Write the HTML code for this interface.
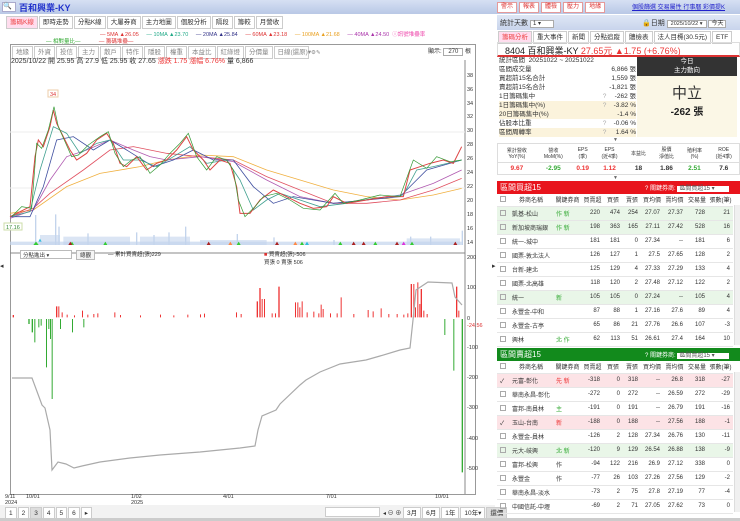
<!DOCTYPE html>
<html><head><meta charset="utf-8"><style>
*{margin:0;padding:0;box-sizing:border-box}
body{width:740px;height:521px;overflow:hidden;background:#fff;font-family:"Liberation Sans","Noto Sans CJK TC",sans-serif;font-size:7px;color:#333;position:relative}
.a{position:absolute;white-space:nowrap}
.top{left:0;top:0;width:740px;height:14px;background:linear-gradient(#d6e0f3,#b9c8e6)}
.tab{display:inline-block;border:1px solid #ccc;background:#fff;padding:1px 3px;margin-right:1px;font-size:6.5px;line-height:9px}
.btn{display:inline-block;border:1px solid #e59a9a;background:#fff;color:#d33;padding:0 3px;font-size:6px;line-height:9px;margin-right:2px}
table{border-collapse:collapse}
.t td{height:14px;border-bottom:1px solid #e6e6e6;font-size:6px;text-align:right;padding-right:3px}
.t td.l{text-align:left;padding-left:3px}
.t tr.h td{height:12px;text-align:center;background:#fff;padding:0}
.g{background:#e9f6e8}.p{background:#fce3e6}
.cb{display:inline-block;width:6px;height:6px;border:1px solid #aaa;vertical-align:middle}
.st td{height:8.9px;line-height:8px;padding:0}
</style></head><body>
<div class="a top"></div>
<div class="a" style="left:2px;top:2px;width:14px;height:10px;background:#fff;border:1px solid #aac;font-size:7px;line-height:8px">🔍</div>
<div class="a" style="left:19px;top:1px;font-size:9px;font-weight:bold;color:#2233cc">百和興業-KY</div>
<div class="a" style="left:497px;top:2px"><span class="btn">警示</span><span class="btn">報表</span><span class="btn">體檢</span><span class="btn">壓力</span><span class="btn">地緣</span></div>
<div class="a" style="left:632px;top:2px;font-size:6px;color:#22c;text-decoration:underline">個股篩選 交易屬性 行事曆 彩價提K</div>

<div class="a" style="left:6px;top:16px"><span class="tab" style="color:#e44;background:#fde">籌碼K線</span><span class="tab">即時走勢</span><span class="tab">分點K線</span><span class="tab">大屢券商</span><span class="tab">主力地圖</span><span class="tab">個股分析</span><span class="tab">隔段</span><span class="tab">籌較</span><span class="tab">月營收</span></div>
<div class="a" style="left:100px;top:30px;font-size:5.5px"><span style="color:#d33">— 5MA ▲26.05</span>&nbsp;&nbsp;&nbsp;&nbsp;&nbsp;<span style="color:#2a8">— 10MA ▲23.70</span>&nbsp;&nbsp;&nbsp;&nbsp;&nbsp;<span style="color:#338">— 20MA ▲25.84</span>&nbsp;&nbsp;&nbsp;&nbsp;&nbsp;<span style="color:#d33">— 60MA ▲23.18</span>&nbsp;&nbsp;&nbsp;&nbsp;&nbsp;<span style="color:#e9a020">— 100MA ▲21.68</span>&nbsp;&nbsp;&nbsp;&nbsp;&nbsp;<span style="color:#a3a">— 40MA ▲24.50</span>&nbsp;&nbsp;<span style="color:#e4a">ⓘ訊號堆疊率</span></div>
<div class="a" style="left:46px;top:37px;font-size:5.5px"><span style="color:#3a3">— 相對量比—</span>&nbsp;&nbsp;&nbsp;&nbsp;&nbsp;&nbsp;&nbsp;&nbsp;&nbsp;&nbsp;&nbsp;&nbsp;<span style="color:#d33">— 籌碼堆疊—</span></div>
<div class="a" style="left:10px;top:44px;width:466px;height:451px;border:1px solid #999"></div>
<div class="a" style="left:12px;top:46px;font-size:5.5px;color:#888"><span class="tab">地緣</span><span class="tab">外資</span><span class="tab">投信</span><span class="tab">主力</span><span class="tab">散戶</span><span class="tab">特作</span><span class="tab">隱股</span><span class="tab">權重</span><span class="tab">本益比</span><span class="tab">紅綠燈</span><span class="tab">分價量</span><span class="tab" style="width:35px">日線(還原)▾</span> ⚙✎</div>
<div class="a" style="left:428px;top:46px;font-size:6px">顯示: <span style="border:1px solid #aaa;padding:0 4px">270</span> 根</div>
<div class="a" style="left:11px;top:56px;font-size:7px">2025/10/22 開 25.95 高 27.9 低 25.95 收 27.65 <span style="color:#e33">漲跌 1.75 漲幅 6.76%</span> 量 6,866</div>

<svg class="a" style="left:0;top:0" width="495" height="521">
<g font-size="5.5" fill="#333">
<text x="467" y="77">38</text><text x="467" y="91">36</text><text x="467" y="105">34</text><text x="467" y="118">32</text><text x="467" y="132">30</text><text x="467" y="146">28</text><text x="467" y="160">26</text><text x="467" y="174">24</text><text x="467" y="188">22</text><text x="467" y="202">20</text><text x="467" y="216">18</text><text x="467" y="230">16</text><text x="467" y="244">14</text>
<text x="467" y="259">200</text><text x="467" y="289">100</text><text x="467" y="320">0</text><text x="467" y="327" fill="#d33">-24.56</text><text x="467" y="349">-100</text><text x="467" y="379">-200</text><text x="467" y="409">-300</text><text x="467" y="440">-400</text><text x="467" y="470">-500</text>
<text x="5" y="498">9/11</text><text x="5" y="504">2024</text><text x="26" y="498">10/01</text><text x="131" y="498">1/02</text><text x="131" y="504">2025</text><text x="223" y="498">4/01</text><text x="326" y="498">7/01</text><text x="435" y="498">10/01</text>
</g>
<line x1="10" y1="253" x2="465" y2="253" stroke="#888"/>
<line x1="465" y1="60" x2="465" y2="494" stroke="#888"/>
<line x1="10" y1="132" x2="465" y2="132" stroke="#eee"/><line x1="10" y1="188" x2="465" y2="188" stroke="#eee"/>
<g transform="translate(0,60) scale(0.33333)" fill="none">
<g fill="#c3d4ec">
<path d="M105 555V465h4v90zM165 555V463h4v92zM175 555V500h4v55zM262 555V520h4v35zM408 555V517h4v38zM460 555V525h4v30zM505 555V517h4v38zM555 555V500h4v55zM710 555V522h4v33zM820 555V532h4v23zM1000 555V540h4v15zM1230 555V530h4v25zM1290 555V530h4v25zM1385 555V512h4v43z"/>
<path d="M30 555h1355v-10H30z" opacity=".7"/>
<path d="M120 555v-30h60v30zM190 555v-25h200v25zM420 555v-25h150v25zM600 555v-15h200v15zM1220 555v-20h160v20z" opacity=".6"/>
</g>
<g stroke-width="0.8">
<polyline stroke="#f0b040" vector-effect="non-scaling-stroke" points="30,460 100,450 200,380 300,340 420,320 500,300 600,285 700,290 800,330 900,360 1000,390 1100,410 1200,420 1300,405 1385,385"/>
<polyline stroke="#e05060" vector-effect="non-scaling-stroke" points="30,470 100,445 150,400 250,330 330,270 400,260 500,280 600,290 700,300 800,350 900,390 1000,430 1100,430 1200,420 1300,390 1385,355"/>
<polyline stroke="#b05ab0" vector-effect="non-scaling-stroke" points="30,475 100,450 150,360 200,290 260,270 330,240 400,270 450,290 500,300 600,290 700,305 800,360 900,410 1000,430 1100,420 1200,405 1300,370 1385,330"/>
<polyline stroke="#4050a0" vector-effect="non-scaling-stroke" points="30,470 90,470 130,380 170,240 220,230 280,270 330,240 380,270 460,320 520,300 580,270 640,300 700,300 760,380 820,430 880,410 940,420 1000,430 1100,420 1200,410 1280,330 1385,300"/>
<polyline stroke="#40a090" vector-effect="non-scaling-stroke" points="30,470 90,455 120,330 160,200 200,220 240,280 290,250 330,240 370,300 420,300 470,320 520,290 570,260 620,310 680,300 720,360 760,450 800,420 840,400 900,420 960,440 1040,430 1120,415 1210,405 1250,330 1300,320 1385,300"/>
</g>
<polyline stroke="#d44" stroke-width="1" vector-effect="non-scaling-stroke" points="30,470 60,455 90,440 105,290 115,240 130,260 150,200 160,150 170,190 190,230 210,270 230,300 260,280 290,240 320,220 340,250 360,310 380,320 410,290 440,330 470,310 500,300 530,270 560,230 580,270 610,300 630,330 660,300 690,310 710,380 720,460 750,460 780,420 820,390 860,410 900,430 940,445 980,440 1000,410 1040,430 1100,420 1160,410 1210,410 1230,330 1260,320 1290,310 1330,300 1360,310 1385,260"/>
<polyline stroke="#393" stroke-width="0.7" vector-effect="non-scaling-stroke" points="35,470 65,440 95,445 110,250 125,265 145,210 162,140 175,200 195,245 215,290 235,285 265,255 300,230 325,215 345,280 370,320 395,300 420,290 450,340 480,315 510,280 540,250 565,220 590,290 620,330 650,290 680,300 700,330 715,420 735,470 765,440 790,410 830,400 870,420 910,445 960,450 1005,400 1030,430 1080,420 1140,405 1200,410 1240,300 1280,325 1310,290 1350,305 1385,300"/>
<g stroke="none">
<path fill="#3c3" d="M100 555l8-10 8 10zM210 555l6-10 6 10zM310 555l6-10 6 10zM710 555l6-10 6 10zM900 555l6-10 6 10zM1015 555l6-10 6 10zM1120 555l6-10 6 10zM1230 555l6-10 6 10z"/>
<path fill="#a22" d="M205 555l6-10 6 10zM620 555l6-10 6 10zM825 555l6-10 6 10zM1055 555l6-10 6 10zM1085 555l6-10 6 10zM1185 555l6-10 6 10zM1360 555l6-10 6 10z"/>
<path fill="#3bd" d="M915 555l6-10 6 10zM115 545l5-9 5 9z"/><path fill="#d3d" d="M1205 555l6-10 6 10z"/><path fill="#f84" d="M880 555l6-10 6 10zM685 555l6-10 6 10z"/>
</g>
</g>
<rect x="48" y="90" width="10" height="7" fill="#fff" stroke="#eca"/><text x="50" y="96" font-size="5.5" fill="#d33">34</text>
<rect x="4" y="223" width="18" height="7" fill="#fff" stroke="#cda"/><text x="6" y="229" font-size="5.5" fill="#383">17.16</text>
<g transform="translate(0,240) scale(0.33333)" stroke="none">
<path fill="#e33" d="M38 232v-7h4v7zM168 232v-33h4v33zM175 232v-33h3v33zM185 232v-15h3v15zM200 232v-8h3v8zM222 232v-6h3v6zM246 232v-20h3v20zM262 232v-8h3v8zM280 232v-10h3v10zM292 232v-12h3v12zM343 232v-15h3v15zM360 232v-7h3v7zM420 232v-6h3v6zM480 232v-8h3v8zM520 232v-6h3v6zM562 232v-8h3v8zM600 232v-9h3v9zM612 232v-11h3v11zM708 232v-15h3v15zM722 232v-10h3v10zM770 232v-48h4v48zM778 232v-88h4v88zM785 232v-55h3v55zM792 232v-55h3v55zM815 232v-12h3v12zM825 232v-12h3v12zM835 232v-92h4v92zM885 232v-45h3v45zM892 232v-45h3v45zM898 232v-30h3v30zM905 232v-48h3v48zM920 232v-15h3v15zM940 232v-17h3v17zM955 232v-12h3v12zM962 232v-38h3v38zM968 232v-25h3v25zM990 232v-12h3v12zM1010 232v-12h3v12zM1022 232v-60h3v60zM1060 232v-10h3v10zM1103 232v-22h3v22zM1118 232v-18h3v18zM1142 232v-27h3v27zM1165 232v-10h3v10zM1190 232v-10h3v10zM1210 232v-8h3v8zM1222 232v-12h3v12zM1232 232v-100h4v100zM1240 232v-100h3v100zM1245 232v-30h3v30zM1252 232v-105h3v105zM1258 232v-40h3v40zM1262 232v-85h4v85zM1270 232v-20h3v20zM1280 232v-10h3v10zM1368 232v-92h4v92zM1375 232v-20h3v20z"/>
</g>
<g transform="translate(0,320) scale(0.33333)" stroke="none" fill="#3a3">
<path d="M85 -3v15h4v-15zM95 -3v40h4v-40zM103 -3v70h3v-70zM115 -3v25h3v-25zM122 -3v20h3v-20zM138 -3v145h3v-145zM145 -3v30h3v-30zM150 -3v60h3v-60zM155 -3v240h3v-240zM180 -3v30h3v-30zM216 -3v40h3v-40zM250 -3v25h3v-25zM1333 -3v48h3v-48zM1360 -3v155h3v-155zM1385 -3v460h4v-460z"/>
</g>
</svg>
<svg class="a" style="left:0;top:0;z-index:5" width="495" height="521"><polyline fill="none" stroke="#aaa" stroke-width="1.2" points="12,378 32,378 42,405 45,408 50,430 52,470 58,462 66,464 74,468 82,466 100,462 130,458 160,455 200,452 240,448 255,446 258,430 262,416 276,410 280,404 300,385 306,380 320,372 340,364 366,360 380,356 400,350 410,348 413,320 416,290 428,282 452,283 455,297 462,305"/></svg>
<div class="a" style="left:20px;top:250px;width:52px;height:9px;border:1px solid #bbb;font-size:5.5px;padding-left:2px;background:#fff">分點進出 ▾</div>
<div class="a" style="left:76px;top:250px;border:1px solid #bbb;font-size:5.5px;padding:0 3px;background:#f4f4f4">總觀</div>
<div class="a" style="left:108px;top:250px;font-size:5.5px">— 累計買賣超(張)229</div>
<div class="a" style="left:264px;top:250px;font-size:5.5px"><span style="color:#d33">■</span> 買賣超(張)-506<br>買張 0 賣張 506</div>
<div class="a" style="left:0;top:262px;font-size:7px">◂</div><div class="a" style="left:492px;top:262px;font-size:7px">▸</div>
<div class="a" style="left:0;top:505px;width:495px;height:14px;background:#f2f2f2"></div>
<div class="a" style="left:5px;top:507px;font-size:6px"><span class="tab">1</span><span class="tab">2</span><span class="tab" style="background:#ddd">3</span><span class="tab">4</span><span class="tab">5</span><span class="tab">6</span><span class="tab">▸</span></div>
<div class="a" style="left:325px;top:507px;width:55px;height:10px;border:1px solid #ccc;background:#fff"></div>
<div class="a" style="left:383px;top:507px;font-size:6px">◂ ⊖ ⊕ <span class="tab">3月</span><span class="tab">6月</span><span class="tab">1年</span><span class="tab">10年▾</span><span class="tab" style="background:#ddd">還價</span></div>
<div class="a" style="left:0;top:518px;width:740px;height:3px;background:#ccc"></div>

<div class="a" style="left:497px;top:15px;width:243px;height:15px;background:linear-gradient(#dfe7f5,#c8d4ec)"></div>
<div class="a" style="left:500px;top:18px;font-size:7px">統計天數 <span style="border:1px solid #aaa;background:#fff;padding:0 12px 0 2px;font-size:6px">1 ▾</span></div>
<div class="a" style="left:642px;top:18px;font-size:7px">🔒日期 <span style="border:1px solid #aaa;background:#fff;padding:0 3px;font-size:5.5px">2025/10/22 ▾</span> <span style="border:1px solid #aaa;background:#fff;padding:0 2px;font-size:6px">今天</span></div>
<div class="a" style="left:498px;top:31px;font-size:5.5px"><span class="tab" style="color:#e44;background:#fde">籌碼分析</span><span class="tab">重大事件</span><span class="tab">新聞</span><span class="tab">分點追蹤</span><span class="tab">體檢表</span><span class="tab">法人目標(30.5元)</span><span class="tab">ETF</span></div>
<div class="a" style="left:497px;top:42px;width:243px;height:15px;border:1px solid #ddd;border-bottom:2px solid #d33"></div>
<div class="a" style="left:505px;top:44px;font-size:9px;color:#222">8404 百和興業-KY <span style="color:#e33">27.65元 ▲1.75 (+6.76%)</span></div>
<div class="a" style="left:637px;top:57px;width:100px;height:19px;background:#333;color:#fff;text-align:center;font-size:6.5px;line-height:9px">今日<br>主力動向</div>
<div class="a" style="left:637px;top:76px;width:100px;height:61px;background:#fbf7e6;text-align:center"><div style="font-size:15px;margin-top:6px;color:#333">中立</div><div style="font-size:10px;font-weight:bold;color:#222">-262 張</div></div>
<table class="a st" style="left:499px;top:57px;width:137px;font-size:6.5px">
<tr><td>統計區間&nbsp; 20251022 ~ 20251022</td><td></td><td></td></tr>
<tr><td>區間成交量</td><td></td><td align="right">6,866 張</td></tr>
<tr><td>買超前15名合計</td><td></td><td align="right">1,559 張</td></tr>
<tr><td>賣超前15名合計</td><td></td><td align="right">-1,821 張</td></tr>
<tr><td>1日籌碼集中</td><td style="color:#aaa">?</td><td align="right">-262 張</td></tr>
<tr style="background:#fbf3dc"><td>1日籌碼集中(%)</td><td style="color:#aaa">?</td><td align="right">-3.82 %</td></tr>
<tr style="background:#fbf3dc"><td>20日籌碼集中(%)</td><td></td><td align="right">-1.4 %</td></tr>
<tr><td>佔股本比重</td><td style="color:#aaa">?</td><td align="right">-0.06 %</td></tr>
<tr style="background:#fbf3dc"><td>區間周轉率</td><td style="color:#aaa">?</td><td align="right">1.64 %</td></tr>
</table>
<div class="a" style="left:613px;top:137px;font-size:5px;color:#666">▼</div>
<table class="a" style="left:497px;top:143px;width:243px;font-size:5px;text-align:center;border:1px solid #ddd">
<tr style="height:19px;border-bottom:1px solid #ddd"><td>累計營收<br>YoY(%)</td><td>營收<br>MoM(%)</td><td>EPS<br>(季)</td><td>EPS<br>(近4季)</td><td>本益比</td><td>股價<br>淨值比</td><td>殖利率<br>(%)</td><td>ROE<br>(近4季)</td></tr>
<tr style="height:12px;font-size:6.5px;font-weight:bold"><td style="color:#e33">9.67</td><td style="color:#3a3">-2.95</td><td style="color:#e33">0.19</td><td style="color:#e33">1.12</td><td>18</td><td>1.86</td><td style="color:#3a3">2.51</td><td>7.6</td></tr>
</table>
<div class="a" style="left:613px;top:175px;font-size:5px;color:#666">▼</div>

<div class="a" style="left:497px;top:181px;width:243px;height:13px;background:#e8141c;color:#fff;font-size:8px;padding:1px 3px">區間買超15<span style="position:absolute;left:148px;top:2px;font-size:6px">? 關鍵券商: <span style="background:#fff;color:#555;padding:0 14px 0 2px">區間買超15 ▾</span></span></div>
<table class="a t" style="left:497px;top:194px;width:236px">
<tr class="h"><td style="width:11px"><span class="cb"></span></td><td style="width:43px">券商名稱</td><td style="width:29px">關鍵券商</td><td style="width:21px">買賣超</td><td style="width:20px">買張</td><td style="width:18px">賣張</td><td style="width:22px">買均價</td><td style="width:23px">賣均價</td><td style="width:22px">交易量</td><td>張數(筆)</td></tr>
<tr class="g"><td class="l"><span class="cb"></span></td><td class="l">凱基-松山</td><td class="l" style="color:#3a3">作 新</td><td>220</td><td>474</td><td>254</td><td>27.07</td><td>27.37</td><td>728</td><td>21</td></tr>
<tr class="g"><td class="l"><span class="cb"></span></td><td class="l">新加坡商瑞銀</td><td class="l" style="color:#3a3">作 新</td><td>198</td><td>363</td><td>165</td><td>27.11</td><td>27.42</td><td>528</td><td>16</td></tr>
<tr><td class="l"><span class="cb"></span></td><td class="l">統一-城中</td><td></td><td>181</td><td>181</td><td>0</td><td>27.34</td><td>--</td><td>181</td><td>6</td></tr>
<tr><td class="l"><span class="cb"></span></td><td class="l">國票-敦北法人</td><td></td><td>126</td><td>127</td><td>1</td><td>27.5</td><td>27.65</td><td>128</td><td>2</td></tr>
<tr><td class="l"><span class="cb"></span></td><td class="l">台新-建北</td><td></td><td>125</td><td>129</td><td>4</td><td>27.33</td><td>27.29</td><td>133</td><td>4</td></tr>
<tr><td class="l"><span class="cb"></span></td><td class="l">國票-北高雄</td><td></td><td>118</td><td>120</td><td>2</td><td>27.48</td><td>27.12</td><td>122</td><td>2</td></tr>
<tr class="g"><td class="l"><span class="cb"></span></td><td class="l">統一</td><td class="l" style="color:#3a3">新</td><td>105</td><td>105</td><td>0</td><td>27.24</td><td>--</td><td>105</td><td>4</td></tr>
<tr><td class="l"><span class="cb"></span></td><td class="l">永豐金-中和</td><td></td><td>87</td><td>88</td><td>1</td><td>27.16</td><td>27.6</td><td>89</td><td>4</td></tr>
<tr><td class="l"><span class="cb"></span></td><td class="l">永豐金-古亭</td><td></td><td>65</td><td>86</td><td>21</td><td>27.76</td><td>26.6</td><td>107</td><td>-3</td></tr>
<tr><td class="l"><span class="cb"></span></td><td class="l">興林</td><td class="l" style="color:#3a3">北 作</td><td>62</td><td>113</td><td>51</td><td>26.61</td><td>27.4</td><td>164</td><td>10</td></tr>
</table>
<div class="a" style="left:734px;top:205px;width:6px;height:140px;background:#f0f0f0;border-left:1px solid #ddd"></div>

<div class="a" style="left:497px;top:348px;width:243px;height:13px;background:#128a1c;color:#fff;font-size:8px;padding:1px 3px">區間賣超15<span style="position:absolute;left:148px;top:2px;font-size:6px">? 關鍵券商: <span style="background:#fff;color:#555;padding:0 14px 0 2px">區間賣超15 ▾</span></span></div>
<table class="a t" style="left:497px;top:361px;width:236px">
<tr class="h"><td style="width:11px"><span class="cb"></span></td><td style="width:43px">券商名稱</td><td style="width:29px">關鍵券商</td><td style="width:21px">買賣超</td><td style="width:20px">買張</td><td style="width:18px">賣張</td><td style="width:22px">買均價</td><td style="width:23px">賣均價</td><td style="width:22px">交易量</td><td>張數(筆)</td></tr>
<tr class="p"><td class="l">✓</td><td class="l">元富-彰化</td><td class="l" style="color:#e33">先 新</td><td>-318</td><td>0</td><td>318</td><td>--</td><td>26.8</td><td>318</td><td>-27</td></tr>
<tr><td class="l"><span class="cb"></span></td><td class="l">華南永昌-彰化</td><td></td><td>-272</td><td>0</td><td>272</td><td>--</td><td>26.59</td><td>272</td><td>-29</td></tr>
<tr><td class="l"><span class="cb"></span></td><td class="l">富邦-南員林</td><td class="l" style="color:#3a3">主</td><td>-191</td><td>0</td><td>191</td><td>--</td><td>26.79</td><td>191</td><td>-16</td></tr>
<tr class="p"><td class="l">✓</td><td class="l">玉山-台南</td><td class="l" style="color:#e33">新</td><td>-188</td><td>0</td><td>188</td><td>--</td><td>27.56</td><td>188</td><td>-1</td></tr>
<tr><td class="l"><span class="cb"></span></td><td class="l">永豐金-員林</td><td></td><td>-126</td><td>2</td><td>128</td><td>27.34</td><td>26.76</td><td>130</td><td>-11</td></tr>
<tr class="g"><td class="l"><span class="cb"></span></td><td class="l">元大-岐興</td><td class="l" style="color:#3a3">北 新</td><td>-120</td><td>9</td><td>129</td><td>26.54</td><td>26.88</td><td>138</td><td>-9</td></tr>
<tr><td class="l"><span class="cb"></span></td><td class="l">富邦-松興</td><td class="l">作</td><td>-94</td><td>122</td><td>216</td><td>26.9</td><td>27.12</td><td>338</td><td>0</td></tr>
<tr><td class="l"><span class="cb"></span></td><td class="l">永豐金</td><td class="l">作</td><td>-77</td><td>26</td><td>103</td><td>27.26</td><td>27.56</td><td>129</td><td>-2</td></tr>
<tr><td class="l"><span class="cb"></span></td><td class="l">華南永昌-淡水</td><td></td><td>-73</td><td>2</td><td>75</td><td>27.8</td><td>27.19</td><td>77</td><td>-4</td></tr>
<tr><td class="l"><span class="cb"></span></td><td class="l">中國信託-中壢</td><td></td><td>-69</td><td>2</td><td>71</td><td>27.05</td><td>27.62</td><td>73</td><td>0</td></tr>
</table>
<div class="a" style="left:734px;top:372px;width:6px;height:140px;background:#f0f0f0;border-left:1px solid #ddd"></div>
</body></html>
